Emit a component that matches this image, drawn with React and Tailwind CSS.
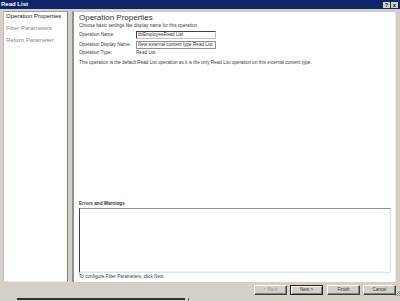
import React from 'react';

const font = { fontFamily: '"Liberation Sans", Arial, sans-serif' };

const WinButton = ({ label, disabled, isDefault }) => (
    <button
        disabled={disabled}
        className={`w-[33px] h-[10px] bg-[#d4d0c8] text-[4.5px] leading-[8px] flex items-center justify-center border ${
            isDefault
                ? 'border-[#202020] shadow-[inset_1px_1px_0_#ffffff,inset_-1px_-1px_0_#808080]'
                : 'border-t-white border-l-white border-r-[#404040] border-b-[#404040] shadow-[inset_-1px_-1px_0_#808080]'
        } ${disabled ? 'text-[#a0a0a0]' : 'text-[#333]'}`}
    >
        {label}
    </button>
);

const FieldRow = ({ label, children, height = 'h-[8px]' }) => (
    <div className={`flex items-center ${height}`}>
        <span className="w-[57px] shrink-0">{label}</span>
        {children}
    </div>
);

const App = () => {
    return (
        <div style={font} className="w-[400px] h-[301px] bg-[#d4d0c8] flex flex-col overflow-hidden">
            {/* Title bar */}
            <div className="h-[9px] bg-[#0b266b] flex items-center justify-between pl-[1px] pr-[2px]">
                <span className="text-white font-bold text-[6px] leading-[9px]">Read List</span>
                <div className="flex gap-[1px]">
                    <span className="w-[7px] h-[6px] bg-[#d4d0c8] text-[5px] leading-[6px] font-bold text-black flex items-center justify-center">?</span>
                    <span className="w-[7px] h-[6px] bg-[#d4d0c8] text-[5px] leading-[6px] font-bold text-black flex items-center justify-center">x</span>
                </div>
            </div>

            {/* Body */}
            <div className="mt-[2px] h-[271px] flex pl-[3px] gap-[4px]">
                {/* Steps */}
                <div className="w-[65px] bg-white border border-t-[#a0a0a0] border-l-[#c0c0c0] border-r-[#808080] border-b-[#e8e8e8] flex flex-col gap-[4px] pl-[2px] text-[6px] leading-[8px]">
                    <span className="text-[#222]">Operation Properties</span>
                    <span className="text-[#888]">Filter Parameters</span>
                    <span className="text-[#888]">Return Parameter</span>
                </div>

                {/* Main panel */}
                <div className="w-[324px] bg-white border-l-2 border-t border-l-[#909090] border-t-[#c8c8c8] border-r border-r-[#e8e8e8] flex flex-col pl-[5px] pr-[5px] text-[4.65px] text-[#3a3a3a]">
                    <h1 className="mt-[1px] text-[8px] leading-[10px] text-[#333] font-normal">Operation Properties</h1>
                    <p className="leading-[5px]">Choose basic settings like display name for this operation.</p>

                    <div className="mt-[3px] flex flex-col">
                        <FieldRow label="Operation Name:">
                            <div className="w-[80px] h-[8px] border border-t-[#404040] border-l-[#404040] border-r-[#c0c0c0] border-b-[#c0c0c0] flex items-center pl-[1px] text-[#333]">
                                tblEmployeeRead List
                            </div>
                        </FieldRow>
                        <div className="mt-[2px]">
                            <FieldRow label="Operation Display Name:">
                                <div className="w-[80px] h-[8px] border border-[#909090] flex items-center pl-[1px] text-[#333] whitespace-nowrap overflow-hidden">
                                    New external content type Read List
                                </div>
                            </FieldRow>
                        </div>
                        <div className="mt-[1px]">
                            <FieldRow label="Operation Type:" height="h-[7px]">
                                <span>Read List</span>
                            </FieldRow>
                        </div>
                    </div>

                    <p className="mt-[3px] leading-[5px] whitespace-nowrap">
                        This operation is the default Read List operation as it is the only Read List operation on this external content type.
                    </p>

                    <div className="flex-1" />

                    <div className="font-bold text-[#333] leading-[6px]">Errors and Warnings</div>
                    <div className="mt-[1px] h-[65px] w-[312px] border border-t-[#909090] border-l-[#404040] border-r-[#e4e4e4] border-b-[#e4e4e4] shadow-[inset_-1px_-1px_0_#f4f4f4]" />
                    <div className="h-[9px] flex items-center">To configure Filter Parameters, click Next.</div>
                </div>
            </div>

            {/* Buttons */}
            <div className="h-[15px] flex items-start justify-end pt-[3px] pr-[4px] relative">
                <div className="flex">
                    <WinButton label="< Back" disabled />
                    <div className="ml-[3px]">
                        <WinButton label="Next >" isDefault />
                    </div>
                    <div className="ml-[4px]">
                        <WinButton label="Finish" />
                    </div>
                    <div className="ml-[3px]">
                        <WinButton label="Cancel" />
                    </div>
                </div>
                <svg className="absolute right-0 bottom-[1px]" width="6" height="6" viewBox="0 0 6 6">
                    <path d="M6 1 L1 6 M6 3 L3 6 M6 5 L5 6" stroke="#808080" strokeWidth="0.8" />
                </svg>
            </div>

            {/* Bottom strip */}
            <div className="h-[4px] flex items-start pl-[17px] pt-[1px]">
                <div className="w-[168px] h-[2px] bg-[#303030]" />
                <div className="ml-[3px] w-[1px] h-[3px] bg-[#606060]" />
            </div>
        </div>
    );
};

export default App;
